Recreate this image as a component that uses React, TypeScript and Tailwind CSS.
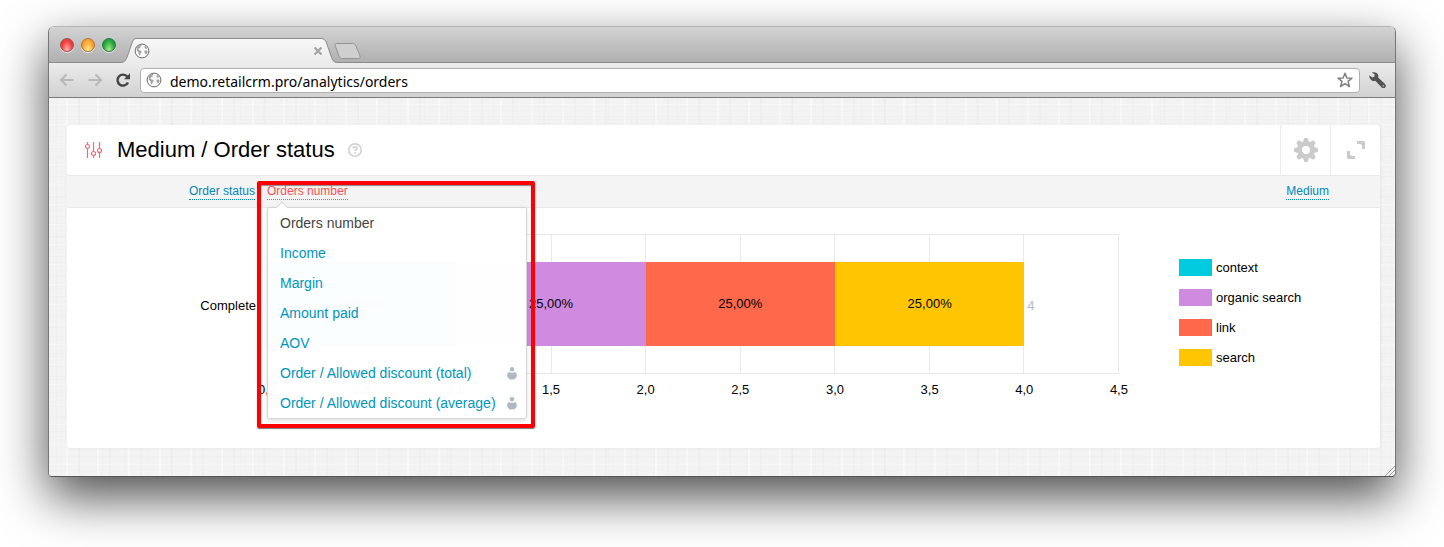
import React, { useState } from "react";

const series = [
  { name: "context", value: 1, color: "#00cbdf" },
  { name: "organic search", value: 1, color: "#ce8be0" },
  { name: "link", value: 1, color: "#ff694b" },
  { name: "search", value: 1, color: "#ffc600" },
];

const axisMax = 4.5;
const ticks = ["0,0", "0,5", "1,0", "1,5", "2,0", "2,5", "3,0", "3,5", "4,0", "4,5"];

const metrics = [
  { label: "Orders number" },
  { label: "Income" },
  { label: "Margin" },
  { label: "Amount paid" },
  { label: "AOV" },
  { label: "Order / Allowed discount (total)", personal: true },
  { label: "Order / Allowed discount (average)", personal: true },
];

const GlobeIcon = () => (
  <svg className="size-4 shrink-0" viewBox="0 0 16 16" aria-hidden="true">
    <circle cx="8" cy="8" r="6.9" fill="#f8f8f8" stroke="#6b6b6b" strokeWidth="1" />
    <path
      d="M2.600 4.600 4.600 2.600 7 1.800l.6 1-1.200.8.2 1-1.600.7-.6 1.400 1.300.7 1.300.4.6 1.200-.9 1.400-.8 1.800-.6.4-.7-2-.2-1.500-1.500-1.300zM10.400 2.600l1.600.9 1.300 1.700-.8.9-1.200-.5-.9-1 .4-.8zM10.600 7.400l1.800.2 1.200.8-.4 1.600-1.200 1.600-.8-1.200-.8-1.200z"
      fill="#a2a2a2"
    />
  </svg>
);

const ArrowIcon = ({ flip = false }: { flip?: boolean }) => (
  <svg
    className={flip ? "size-4 -scale-x-100" : "size-4"}
    viewBox="0 0 16 16"
    fill="none"
    stroke="#b9b9b9"
    strokeWidth="2.2"
    aria-hidden="true"
  >
    <path d="M14.500 8H2.500M7.500 2.500 2 8l5.500 5.500" />
  </svg>
);

const ReloadIcon = () => (
  <svg className="size-4" viewBox="0 0 16 16" aria-hidden="true">
    <path d="M12.300 4.600A5.500 5.500 0 1 0 13 10.500" fill="none" stroke="#444" strokeWidth="2.4" />
    <path d="M15 1.200v6H9z" fill="#444" />
  </svg>
);

const StarIcon = () => (
  <svg className="size-4" viewBox="0 0 16 16" aria-hidden="true">
    <path
      d="M8 1.200 9.900 6 15 6.200 11 9.400 12.400 14.500 8 11.700 3.600 14.500 5 9.400 1 6.200 6.100 6z"
      fill="#fff"
      stroke="#808080"
      strokeWidth="1.5"
      strokeLinejoin="round"
    />
  </svg>
);

const WrenchIcon = () => (
  <svg className="size-[17px]" viewBox="0 0 16 16" aria-hidden="true">
    <path
      d="M.4 3.200 3.200 5.200 5.200 4.200 5.200 2.200 2.600.5C4.800-.3 7.400.4 8.400 2.400c.5 1 .5 1.800.2 2.800l6.500 6c1 1 1 2.400.2 3.300-.9.9-2.300.9-3.300 0L5.900 8.300c-1.200.4-2.400.2-3.500-.6C.9 6.600 0 5 .4 3.200z"
      fill="#515151"
    />
    <circle cx="13.500" cy="13" r=".8" fill="#bbb" />
  </svg>
);

const SlidersIcon = () => (
  <svg className="h-4 w-[18px]" viewBox="0 0 18 16" fill="none" stroke="#ee6a75" strokeWidth="1.2" aria-hidden="true">
    <path d="M2.500 0v2.500M2.500 6.500V16M8.500 0v9.500M8.500 13.500V16M14.500 0v6.500M14.500 10.500V16" />
    <circle cx="2.500" cy="4.500" r="2" />
    <circle cx="8.500" cy="11.500" r="2" />
    <circle cx="14.500" cy="8.500" r="2" />
  </svg>
);

const HelpIcon = () => (
  <svg className="size-[14px]" viewBox="0 0 14 14" fill="none" stroke="#cdcdcd" aria-hidden="true">
    <circle cx="7" cy="7" r="6.200" strokeWidth="1.400" />
    <path d="M5.100 5.600C5.100 4.300 6 3.800 7 3.800s1.900.6 1.900 1.600c0 1.200-1.800 1.200-1.800 2.600" strokeWidth="1.600" />
    <path d="M7.100 9v1.600" strokeWidth="1.600" />
  </svg>
);

const GearIcon = () => (
  <svg className="size-6" viewBox="-12 -12 24 24" aria-hidden="true">
    <g fill="#cbcbcb">
      {[0, 45, 90, 135, 180, 225, 270, 315].map((angle) => (
        <path key={angle} d="M-2.900-8-1.700-12H1.700L2.900-8z" transform={`rotate(${angle})`} />
      ))}
    </g>
    <circle r="6.500" fill="none" stroke="#cbcbcb" strokeWidth="5" />
  </svg>
);

const ExpandIcon = () => (
  <svg className="size-[18px]" viewBox="0 0 18 18" fill="#cbcbcb" aria-hidden="true">
    <path d="M10 0h7l1 1v7h-3V4.500L13.500 3H10zM0 10h3v3.500L4.500 15H8v3H1l-1-1z" />
  </svg>
);

const PersonIcon = () => (
  <svg className="h-[13px] w-[10px]" viewBox="0 0 10 13" fill="#adbac5" aria-hidden="true">
    <circle cx="5" cy="2.200" r="2.200" />
    <path d="M2 5C3 6 7 6 8 5 9.200 5.600 9.800 6.800 9.800 8.500c0 2.500-1.800 4-4.800 4S.2 11 .2 8.500C.2 6.800.8 5.600 2 5z" />
  </svg>
);

const TabStrip = () => (
  <div className="flex h-9 items-end border-b border-[#8c8c8c] bg-linear-to-b from-[#d3d3d3] to-[#b0b0b0]">
    <div className="flex gap-[7px] self-center pl-[11px]">
      <button aria-label="Close" className="size-[14px] rounded-full border border-[#a8524c] bg-[radial-gradient(ellipse_at_50%_95%,#ffb9b4,#f2403f_60%,#c93431)] shadow-[0_1px_0_#e6e6e6]" />
      <button aria-label="Minimize" className="size-[14px] rounded-full border border-[#b5753a] bg-[radial-gradient(ellipse_at_50%_95%,#ffef8c,#fba633_60%,#e0761e)] shadow-[0_1px_0_#e6e6e6]" />
      <button aria-label="Zoom" className="size-[14px] rounded-full border border-[#2d7a40] bg-[radial-gradient(ellipse_at_50%_95%,#b2ee8c,#26ac40_60%,#0d8029)] shadow-[0_1px_0_#e6e6e6]" />
    </div>
    <div className="-mb-px ml-1 grid h-[25px] w-[218px] shrink-0">
      <svg className="[grid-area:1/1] h-[25px] w-[218px]" viewBox="0 0 218 25" aria-hidden="true">
        <defs>
          <linearGradient id="tab" x1="0" x2="0" y1="0" y2="1">
            <stop offset="0" stopColor="#f8f8f8" />
            <stop offset="1" stopColor="#ebebeb" />
          </linearGradient>
        </defs>
        <path
          d="M0 24.500C5 24.500 6 22 7.500 18L12 5C13 2 14 .5 17 .5H201C204 .5 205.500 2 206.500 5L211 18C212.500 22 213 24.500 218 24.500V25H0z"
          fill="url(#tab)"
        />
        <path
          d="M0 24.500C5 24.500 6 22 7.500 18L12 5C13 2 14 .5 17 .5H201C204 .5 205.500 2 206.500 5L211 18C212.500 22 213 24.500 218 24.500"
          fill="none"
          stroke="#8c8c8c"
        />
      </svg>
      <div className="[grid-area:1/1] flex items-center justify-between pr-4 pl-[14px]">
        <GlobeIcon />
        <button aria-label="Close tab">
          <svg className="size-2" viewBox="0 0 8 8" stroke="#a3a3a3" strokeWidth="2.200" aria-hidden="true">
            <path d="m.5.5 7 7M7.500.5l-7 7" />
          </svg>
        </button>
      </div>
    </div>
    <button aria-label="New tab" className="mb-[3px] -ml-1">
      <svg className="block h-4 w-[27px]" viewBox="0 0 27 16" aria-hidden="true">
        <path
          d="M2.500.5H18.500C20.500.5 21.500 1.500 22 3L26 13C26.500 14.500 26 15.500 24.500 15.500H8.500C6.500 15.500 5.500 14.500 5 13L1.200 2.500C.8 1.300 1.200.5 2.500.5z"
          fill="#cfcfcf"
          stroke="#949494"
        />
      </svg>
    </button>
  </div>
);

const Toolbar = () => {
  const [url, setUrl] = useState("demo.retailcrm.pro/analytics/orders");

  return (
    <div className="flex h-[35px] items-center border-b border-[#7b7b7b] bg-linear-to-b from-[#ececec] to-[#d1d1d1] pr-[9px] pl-[10px]">
      <button aria-label="Back"><ArrowIcon /></button>
      <button aria-label="Forward" className="ml-3"><ArrowIcon flip /></button>
      <button aria-label="Reload" className="ml-3"><ReloadIcon /></button>
      <div className="ml-[9px] flex h-[25px] grow items-center rounded border border-[#b0b0b0] bg-white pr-[6px] pl-[5px]">
        <GlobeIcon />
        <input
          aria-label="Address"
          className="ml-2 min-w-0 grow pt-[3px] font-['Noto_Sans',sans-serif] text-sm text-black outline-none"
          value={url}
          onChange={(e) => setUrl(e.target.value)}
        />
        <button aria-label="Bookmark"><StarIcon /></button>
      </div>
      <button aria-label="Settings" className="ml-[9px]"><WrenchIcon /></button>
    </div>
  );
};

const MetricMenu = () => {
  const [selected, setSelected] = useState("Orders number");

  return (
    <div className="relative ml-3 flex h-full items-center">
      <button className="border-b border-dotted border-[#ff4f52] pt-px text-xs leading-[15px] text-[#ff4f52]">
        {selected}
      </button>
      <div className="absolute top-full left-0 z-10 w-[260px] rounded-xs border border-[#d6d6d6] bg-white/98 shadow-[0_2px_5px_rgba(0,0,0,0.12)]">
        <span className="absolute -top-[5px] left-[10px] size-2 rotate-45 border-t border-l border-[#d6d6d6] bg-white" />
        {metrics.map((metric) => (
          <button
            key={metric.label}
            className={`relative flex h-[30px] w-full items-center justify-between pr-[9px] pl-3 text-sm whitespace-nowrap ${
              metric.label === selected ? "text-[#444]" : "text-[#0095bd]"
            }`}
            onClick={() => setSelected(metric.label)}
          >
            {metric.label}
            {metric.personal && <PersonIcon />}
          </button>
        ))}
      </div>
      {/* highlight frame around the open menu */}
      <div className="pointer-events-none absolute top-[5px] -left-[10px] z-20 h-[247px] w-[278px] rounded-xs border-4 border-[#fe0000] shadow-[0_1px_1px_#777,inset_0_1px_1px_#888]" />
    </div>
  );
};

const StatusChart = () => (
  <div className="flex pt-[26px] pb-[50px] text-[13px] leading-4 text-black">
    <div className="flex h-36 w-[189px] shrink-0 items-center justify-end">Complete</div>
    <div className="ml-[11px] min-w-0 grow">
      <div className="grid h-[140px] border-y border-[#e6e6e6]">
        <div className="[grid-area:1/1] flex justify-between">
          {ticks.map((tick) => (
            <span key={tick} className="w-px bg-[#e9e9e9]" />
          ))}
        </div>
        <div className="[grid-area:1/1] flex items-center">
          {series.map((item) => (
            <div
              key={item.name}
              className="flex h-[84px] shrink-0 items-center justify-center"
              style={{ width: `${(item.value / axisMax) * 100}%`, backgroundColor: item.color }}
            >
              25,00%
            </div>
          ))}
          <span className="pt-1 pl-[3px] text-[#b3bbc2]">4</span>
        </div>
      </div>
      <div className="mt-2 flex justify-between">
        {ticks.map((tick) => (
          <span key={tick} className="flex w-0 justify-center">{tick}</span>
        ))}
      </div>
    </div>
    <ul className="flex w-[261px] shrink-0 flex-col gap-[13px] pt-[25px] pl-[60px]">
      {series.map((item) => (
        <li key={item.name} className="flex h-[17px] items-end gap-1">
          <span className="h-[17px] w-[33px]" style={{ backgroundColor: item.color }} />
          {item.name}
        </li>
      ))}
    </ul>
  </div>
);

const App: React.FC = () => {
  return (
    <div className="bg-white px-12 pt-[26px] pb-[70px] font-['Liberation_Sans',Arial,sans-serif]">
      <div className="relative rounded-t-md rounded-b-sm border border-[#777] border-t-[#b5b5b5] border-b-[#555] shadow-[0_20px_50px_rgba(0,0,0,0.7)]">
        <div className="overflow-hidden rounded-t-[5px]">
          <TabStrip />
          <Toolbar />
        </div>
        {/* linen texture: thin light and dark threads whose periods never line up */}
        <main className="rounded-b-sm bg-[#f3f3f3] bg-[repeating-linear-gradient(90deg,transparent_0_17px,rgba(255,255,255,0.4)_17px_19px,transparent_19px_29px,rgba(0,0,0,0.014)_29px_31px),repeating-linear-gradient(90deg,transparent_0_7px,rgba(0,0,0,0.01)_7px_8px,transparent_8px_23px),repeating-linear-gradient(0deg,transparent_0_11px,rgba(255,255,255,0.4)_11px_12px,transparent_12px_19px,rgba(0,0,0,0.014)_19px_20px),repeating-linear-gradient(0deg,transparent_0_5px,rgba(0,0,0,0.01)_5px_6px,transparent_6px_13px)] pt-[27px] pr-[15px] pb-7 pl-[18px]">
          <section className="rounded-sm bg-white shadow-[0_0_4px_rgba(0,0,0,0.06)]">
            <header className="flex h-[51px] items-stretch border-b border-[#e9e9e9]">
              <div className="flex grow items-center pl-[18px]">
                <SlidersIcon />
                <h1 className="ml-[14px] text-[22px] leading-7 text-black">Medium / Order status</h1>
                <button aria-label="Help" className="ml-[13px]"><HelpIcon /></button>
              </div>
              <button aria-label="Settings" className="flex w-[50px] items-center justify-center border-l border-[#ececec]">
                <GearIcon />
              </button>
              <button aria-label="Expand" className="flex w-[50px] items-center justify-center border-l border-[#ececec]">
                <ExpandIcon />
              </button>
            </header>
            <div className="flex h-8 items-center border-b border-[#e9e9e9] bg-[#f4f4f4]">
              <div className="flex w-[188px] justify-end">
                <button className="border-b border-dotted border-[#0088bb] pt-px text-xs leading-[15px] text-[#0088bb]">
                  Order status
                </button>
              </div>
              <MetricMenu />
              <button className="mr-[51px] ml-auto border-b border-dotted border-[#0088bb] pt-px text-xs leading-[15px] text-[#0088bb]">
                Medium
              </button>
            </div>
            <StatusChart />
          </section>
        </main>
        <svg className="absolute right-0 bottom-0 size-[10px]" viewBox="0 0 10 10" stroke="#999" strokeWidth="1" aria-hidden="true">
          <path d="M0 10 10 0M4 10l6-6M8 10l2-2" />
        </svg>
      </div>
    </div>
  );
};

export default App;
